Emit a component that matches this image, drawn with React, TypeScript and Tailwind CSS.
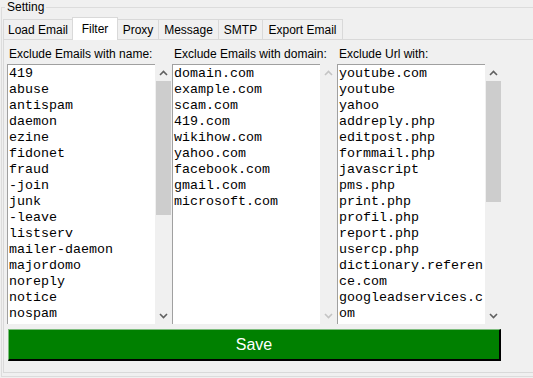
import React from "react";

const names = ["419","abuse","antispam","daemon","ezine","fidonet","fraud","-join","junk","-leave","listserv","mailer-daemon","majordomo","noreply","notice","nospam"];
const domains = ["domain.com","example.com","scam.com","419.com","wikihow.com","yahoo.com","facebook.com","gmail.com","microsoft.com"];
const urls = ["youtube.com","youtube","yahoo","addreply.php","editpost.php","formmail.php","javascript","pms.php","print.php","profil.php","report.php","usercp.php","dictionary.reference.com","googleadservices.com"];

function Chevron({ up, enabled }: { up: boolean; enabled: boolean }) {
  return (
    <svg width="9" height="6" viewBox="0 0 9 6">
      <polyline
        points={up ? "1,5 4.5,1.5 8,5" : "1,1 4.5,4.5 8,1"}
        fill="none"
        stroke={enabled ? "#606060" : "#c4c4c4"}
        strokeWidth="1.6"
      />
    </svg>
  );
}

function ListBox({ items, thumb }: { items: string[]; thumb: number | null }) {
  return (
    <div className="flex h-[260px]">
      <div className="w-[148px] h-full bg-white border-t border-l border-[#a0a0a0] pl-[1px] pt-[1px] overflow-hidden font-['Liberation_Mono','Courier_New',monospace] text-[13.33px] leading-[16px] text-black">
        {items.map((t, i) => (
          <div key={i} className="break-all">{t}</div>
        ))}
      </div>
      <div className="w-[17px] h-full bg-[#f0f0f0] flex flex-col">
        <div className="h-[17px] flex items-center justify-center">
          <Chevron up enabled={thumb !== null} />
        </div>
        {thumb !== null ? <div className="mx-px bg-[#cdcdcd]" style={{ height: thumb }} /> : null}
        <div className="flex-1" />
        <div className="h-[17px] flex items-center justify-center">
          <Chevron up={false} enabled={thumb !== null} />
        </div>
      </div>
    </div>
  );
}

function Column({ label, items, thumb }: { label: string; items: string[]; thumb: number | null }) {
  return (
    <div className="w-[165px] flex flex-col">
      <div className="h-[14px] leading-[14px] pl-[2px] whitespace-nowrap">{label}</div>
      <div className="mt-[3px]">
        <ListBox items={items} thumb={thumb} />
      </div>
    </div>
  );
}

const tabs = [
  { name: "Load Email", w: "w-[70px]" },
  { name: "Filter", w: "w-[46px]" },
  { name: "Proxy", w: "w-[42px]" },
  { name: "Message", w: "w-[61px]" },
  { name: "SMTP", w: "w-[45px]" },
  { name: "Export Email", w: "w-[81px]" },
];

export default function App() {
  return (
    <div className="w-[533px] h-[378px] overflow-hidden bg-[#f0f0f0] font-['Liberation_Sans',Arial,sans-serif] text-[12px] text-black">
      <fieldset className="ml-[1px] w-[545px] h-[377px] border border-[#dcdcdc] pl-[1px]">
        <legend className="ml-[2px] px-[2px] leading-[15px] text-[12px]">Setting</legend>
        <div className="mt-[2px] flex items-end h-[22px]">
          {tabs.map((t, i) =>
            t.name === "Filter" ? (
              <div
                key={t.name}
                className={`${t.w} -ml-px h-[23px] -mb-px relative z-10 bg-white border-t border-l border-r border-[#d9d9d9] flex items-center justify-center pb-[1px]`}
              >
                {t.name}
              </div>
            ) : (
              <div
                key={t.name}
                className={`${t.w} ${i === 0 ? "" : "-ml-px"} h-[20px] bg-[#f0f0f0] border-t border-l border-r border-[#d9d9d9] flex items-center justify-center`}
              >
                {t.name}
              </div>
            )
          )}
        </div>
        <div className="w-[540px] h-[334px] border border-[#d9d9d9] pt-[7px] pl-[3px]">
          <div className="flex">
            <Column label="Exclude Emails with name:" items={names} thumb={134} />
            <Column label="Exclude Emails with domain:" items={domains} thumb={null} />
            <Column label="Exclude Url with:" items={urls} thumb={121} />
          </div>
          <button className="mt-[5px] ml-[1px] w-[493px] h-[32px] bg-[#008000] border-l border-t border-[#7dbd7d] border-r-2 border-b-2 border-r-black border-b-black text-white text-[16px] flex items-center justify-center">
            Save
          </button>
        </div>
      </fieldset>
    </div>
  );
}
